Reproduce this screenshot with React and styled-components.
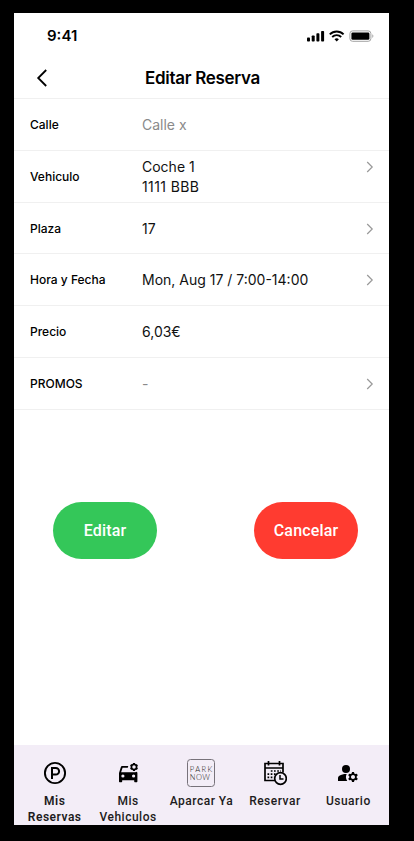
import React from "react";
import styled, { createGlobalStyle } from "styled-components";
import { MdManageAccounts } from "react-icons/md";

const GlobalStyle = createGlobalStyle`
  * { box-sizing: border-box; }
  body { margin: 0; background: #000; }
`;

const Stage = styled.div`
  height: 841px;
  padding: 13px 25px 16px 14px;
  background: #000;
`;

const Phone = styled.main`
  display: flex;
  flex-direction: column;
  width: 375px;
  height: 812px;
  overflow: hidden;
  background: #fff;
  color: #000;
  font-family: Inter, sans-serif;
`;

const StatusBar = styled.div`
  display: flex;
  align-items: center;
  justify-content: space-between;
  height: 45px;
  padding: 1px 15px 0 33px;
`;

const Clock = styled.span`
  font-size: 15px;
  font-weight: 600;
  line-height: 20px;
`;

const StatusIcons = styled.svg`
  display: block;
  width: 67px;
  height: 12px;
`;

const Header = styled.header`
  display: grid;
  grid-template-columns: 40px 1fr 40px;
  align-items: center;
  height: 41px;
  padding: 0 8px;
  border-bottom: 1px solid #f0f0f0;
`;

const BackButton = styled.button`
  display: flex;
  justify-content: center;
  padding: 0;
  border: 0;
  background: none;
`;

const Title = styled.h1`
  margin: 0;
  padding-left: 2px;
  text-align: center;
  font-size: 17px;
  font-weight: 600;
  letter-spacing: -0.3px;
  line-height: 22px;
`;

const Row = styled.div`
  display: grid;
  grid-template-columns: 112px 1fr 8px;
  align-items: center;
  height: ${(p) => (p.$compact ? 51 : 52)}px;
  padding: ${(p) => (p.$compact ? 1 : 0)}px 15px 0 16px;
  border-bottom: 1px solid #f0f0f0;
`;

const Label = styled.span`
  font-size: 12px;
  font-weight: 500;
  line-height: 20px;
`;

const Value = styled.span`
  color: ${(p) => (p.$muted ? "#8a8a8a" : "#111")};
  font-size: 14px;
  line-height: 20px;
`;

const ValueLine = styled.span`
  display: block;
  letter-spacing: ${(p) => p.$spacing || 0}px;
`;

const Chevron = styled.svg`
  display: block;
  width: 8px;
  height: 12px;
  margin-bottom: ${(p) => (p.$raised ? 20 : 0)}px;
`;

const Actions = styled.div`
  display: flex;
  justify-content: space-between;
  margin-top: 92px;
  padding: 0 31px 0 39px;
`;

const ActionButton = styled.button`
  width: 104px;
  height: 57px;
  padding: 0;
  border: 0;
  border-radius: 29px;
  background: ${(p) => (p.$danger ? "#ff3b30" : "#34c759")};
  color: #fff;
  font: 500 16px/24px Roboto, sans-serif;
  letter-spacing: 0.15px;
`;

const NavBar = styled.nav`
  display: grid;
  grid-template-columns: repeat(5, 1fr);
  height: 80px;
  margin-top: auto;
  padding: 12px 4px 0;
  background: #f3edf7;
`;

const NavItem = styled.div`
  display: flex;
  flex-direction: column;
  align-items: center;
`;

const NavIcon = styled.div`
  display: flex;
  align-items: center;
  justify-content: center;
  height: 32px;
  margin-bottom: 4px;

  svg { display: block; }
`;

const NavLabel = styled.span`
  color: #1d1b20;
  font: 500 12px/16px Roboto, sans-serif;
  letter-spacing: 0.5px;
  text-align: center;
  white-space: pre;
  font-weight: ${(p) => (p.$active ? 600 : 500)};
`;

const ParkNowText = styled.text`
  font-family: Lato, sans-serif;
  font-size: 7.5px;
  font-weight: 300;
  letter-spacing: ${(p) => p.$spacing}px;
`;

const ParkingIcon = () => (
  <svg width="24" height="24" viewBox="0 0 24 24" fill="none" stroke="#000" strokeWidth="1.9">
    <circle cx="12" cy="12" r="10.1" />
    <path d="M9 18V7h3.8a3.3 3.3 0 0 1 0 6.6H9" strokeWidth="2" />
  </svg>
);

const teeth = [0, 60, 120, 180, 240, 300];

const CarCogIcon = () => (
  <svg width="24" height="24" viewBox="0 0 24 24">
    <path
      fillRule="evenodd"
      d="M12.3 5H6.4c-.8 0-1.4.5-1.6 1.2L3 12v8.2c0 .6.4 1 1 1h1.2c.6 0 1-.4 1-1V19.2h12v1c0 .6.4 1 1 1h1.2c.6 0 1-.4 1-1V12l-.4-1.2c-.8.4-1.7.5-2.5.4H5.1l1.5-4.4h5.2c0-.6.2-1.2.5-1.8ZM6.9 13.4a1.6 1.6 0 1 0 0 3.2 1.6 1.6 0 0 0 0-3.2Zm10.7 0a1.6 1.6 0 1 0 0 3.2 1.6 1.6 0 0 0 0-3.2Z"
    />
    <circle cx="18" cy="6" r="2.5" fill="none" stroke="#000" strokeWidth="1.5" />
    {teeth.map((angle) => (
      <path key={angle} d="M17 2h2l.4 1.6h-2.8Z" transform={`rotate(${angle} 18 6)`} />
    ))}
  </svg>
);

const ParkNowIcon = () => (
  <svg width="28" height="28" viewBox="0 0 28 28">
    <rect x=".5" y=".5" width="27" height="27" rx="3" fill="none" stroke="#77727a" />
    <g fill="#1d1b20">
      <ParkNowText x="2.8" y="12.6" $spacing={1.4}>PARK</ParkNowText>
      <ParkNowText x="2.8" y="21" $spacing={0.5}>NOW</ParkNowText>
    </g>
  </svg>
);

const CalendarIcon = () => (
  <svg width="24" height="26" viewBox="0 0 24 26" fill="none" stroke="#000">
    <path d="M12.5 20.5H2V3.5h18v9M2 8h18" strokeWidth="1.7" />
    <path d="M5.5 1v4.5M16.5 1v4.5" strokeWidth="1.7" />
    <path d="M7.8 11H18M4.5 14.2H13M4.5 17.3H11" strokeWidth="1.7" strokeDasharray="1.7 1.5" />
    <circle cx="17.5" cy="18.5" r="5.8" fill="#f3edf7" strokeWidth="1.7" />
    <path d="M17 15v4h3.5" strokeWidth="1.5" />
  </svg>
);

const rows = [
  { label: "Calle", lines: [{ text: "Calle x" }], muted: true },
  {
    label: "Vehiculo",
    lines: [{ text: "Coche 1" }, { text: "1111 BBB", spacing: 0.4 }],
    link: true,
    raised: true,
  },
  { label: "Plaza", lines: [{ text: "17" }], link: true, compact: true },
  { label: "Hora y Fecha", lines: [{ text: "Mon, Aug 17 / 7:00-14:00" }], link: true },
  { label: "Precio", lines: [{ text: "6,03€" }] },
  { label: "PROMOS", lines: [{ text: "-" }], muted: true, link: true },
];

const tabs = [
  { label: "Mis\nReservas", icon: <ParkingIcon />, active: true },
  { label: "Mis\nVehiculos", icon: <CarCogIcon /> },
  { label: "Aparcar Ya", icon: <ParkNowIcon /> },
  { label: "Reservar", icon: <CalendarIcon /> },
  { label: "Usuario", icon: <MdManageAccounts size={24} color="#000" /> },
];

export default function App() {
  return (
    <Stage>
      <GlobalStyle />
      <Phone>
        <StatusBar>
          <Clock>9:41</Clock>
          <StatusIcons viewBox="0 0 67 12">
            <rect x="0" y="7.5" width="3" height="4" rx=".8" />
            <rect x="4.7" y="5.5" width="3" height="6" rx=".8" />
            <rect x="9.4" y="3.2" width="3" height="8.3" rx=".8" />
            <rect x="14.1" y="1" width="3" height="10.5" rx=".8" />
            <g fill="none" stroke="#000" strokeWidth="1.9">
              <path d="M22.8 4.3a9.8 9.8 0 0 1 13.8 0" />
              <path d="M25.2 7a6.4 6.4 0 0 1 9 0" />
            </g>
            <path d="M27.5 9.2a3.3 3.3 0 0 1 4.4 0l-2.2 2.3Z" />
            <rect x="42.9" y=".9" width="21" height="10.4" rx="2.7" fill="none" stroke="#a3a3a3" />
            <rect x="44.4" y="2.4" width="18" height="7.4" rx="1.3" />
            <path d="M65.3 4.2a2.2 2.2 0 0 1 0 3.8Z" fill="#a3a3a3" />
          </StatusIcons>
        </StatusBar>
        <Header>
          <BackButton aria-label="Volver">
            <svg width="12" height="18" viewBox="0 0 12 18" fill="none" stroke="#000" strokeWidth="1.8">
              <path d="M10.2 1 2.2 9l8 8" />
            </svg>
          </BackButton>
          <Title>Editar Reserva</Title>
        </Header>
        {rows.map((row) => (
          <Row key={row.label} $compact={row.compact}>
            <Label>{row.label}</Label>
            <Value $muted={row.muted}>
              {row.lines.map((line) => (
                <ValueLine key={line.text} $spacing={line.spacing}>{line.text}</ValueLine>
              ))}
            </Value>
            {row.link && (
              <Chevron $raised={row.raised} viewBox="0 0 8 12" fill="none" stroke="#999" strokeWidth="1.2">
                <path d="m1.2 1 5 5-5 5" />
              </Chevron>
            )}
          </Row>
        ))}
        <Actions>
          <ActionButton>Editar</ActionButton>
          <ActionButton $danger>Cancelar</ActionButton>
        </Actions>
        <NavBar>
          {tabs.map((tab) => (
            <NavItem key={tab.label}>
              <NavIcon>{tab.icon}</NavIcon>
              <NavLabel $active={tab.active}>{tab.label}</NavLabel>
            </NavItem>
          ))}
        </NavBar>
      </Phone>
    </Stage>
  );
}
